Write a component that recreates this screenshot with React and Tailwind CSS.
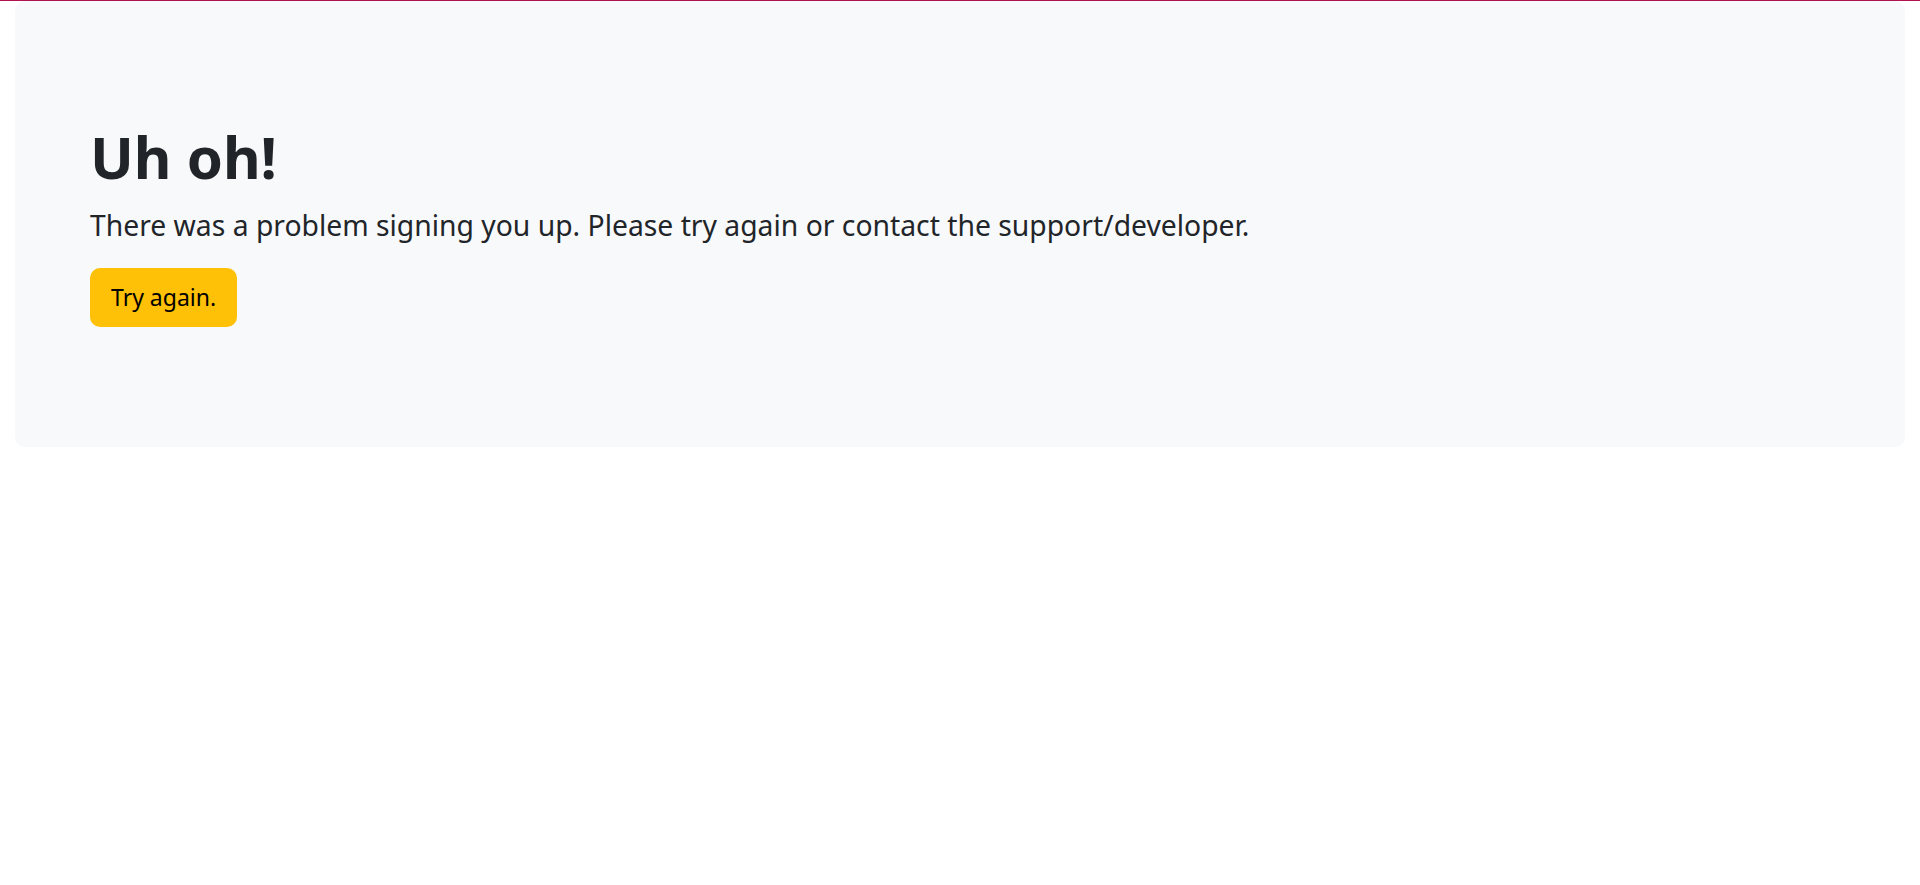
export default function App() {
  return (
    <div className="min-h-screen bg-white" style={{ fontFamily: '"Noto Sans", "Open Sans", sans-serif' }}>
      {/* top accent line */}
      <div className="h-px bg-[#b0124f]" />

      <div className="px-[15px]">
        <div className="mb-[30px] rounded-[10px] bg-[#f8f9fa] p-[60px]">
          <div className="px-[15px] py-[60px]">
            <h1 className="mb-[10px] text-[58px] font-bold leading-[72px] text-[#212529]">Uh oh!</h1>
            <p className="mb-[20px] text-[28.3px] leading-[45px] text-[#212529]">
              There was a problem signing you up. Please try again or contact the support/developer.
            </p>
            <button className="h-[59px] rounded-[10px] bg-[#ffc107] px-[21px] text-[23px] leading-[1.5] text-black">
              Try again.
            </button>
          </div>
        </div>
      </div>
    </div>
  )
}
